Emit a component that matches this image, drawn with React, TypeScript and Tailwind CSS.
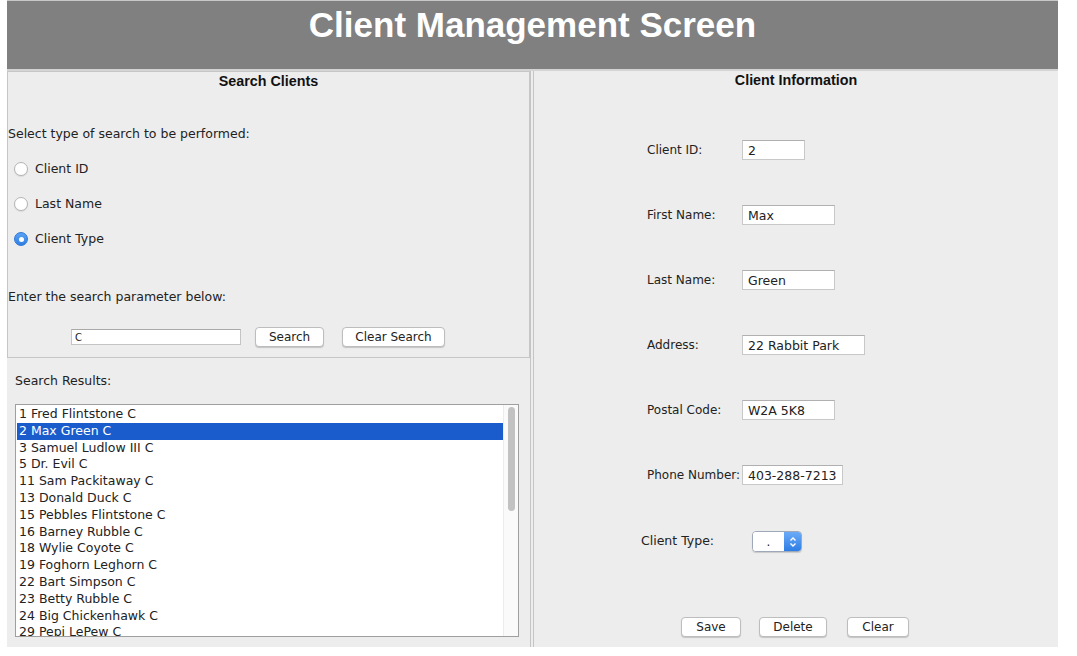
import { useState } from "react";

const clients = [
  "1 Fred Flintstone C",
  "2 Max Green C",
  "3 Samuel Ludlow III C",
  "5 Dr. Evil C",
  "11 Sam Packitaway C",
  "13 Donald Duck C",
  "15 Pebbles Flintstone C",
  "16 Barney Rubble C",
  "18 Wylie Coyote C",
  "19 Foghorn Leghorn C",
  "22 Bart Simpson C",
  "23 Betty Rubble C",
  "24 Big Chickenhawk C",
  "29 Pepi LePew C",
];

const fields = [
  { label: "Client ID:", value: "2", width: "w-[63px]" },
  { label: "First Name:", value: "Max", width: "w-[93px]" },
  { label: "Last Name:", value: "Green", width: "w-[93px]" },
  { label: "Address:", value: "22 Rabbit Park", width: "w-[123px]" },
  { label: "Postal Code:", value: "W2A 5K8", width: "w-[93px]" },
  { label: "Phone Number:", value: "403-288-7213", width: "w-[101px]" },
];

const body = "font-['DejaVu_Sans',sans-serif] text-[12px] text-[#222]";

const MacButton = ({ label, width }: { label: string; width: string }) => (
  <button
    className={`${width} h-[20px] bg-white border border-[#bdbdbd] rounded-[4px] shadow-[0_1px_1px_rgba(0,0,0,0.18)] text-[12px] leading-none text-[#222]`}
  >
    {label}
  </button>
);

const Radio = ({ label, checked }: { label: string; checked?: boolean }) => (
  <label className="flex items-center h-[20px] pl-[6px] gap-[7px]">
    {checked ? (
      <span className="w-[14px] h-[14px] rounded-full bg-gradient-to-b from-[#5aa2f5] to-[#2f7fe3] border border-[#2d78d6] flex items-center justify-center">
        <span className="w-[5px] h-[5px] rounded-full bg-white" />
      </span>
    ) : (
      <span className="w-[14px] h-[14px] rounded-full bg-white border border-[#b4b4b4] shadow-[0_1px_1px_rgba(0,0,0,0.08)]" />
    )}
    <span>{label}</span>
  </label>
);

const App = () => {
  const [selected, setSelected] = useState(1);

  return (
    <div className="w-[1077px] h-[656px] bg-white overflow-hidden">
      <div className={`ml-[7px] w-[1051px] h-[647px] bg-[#ededed] flex flex-col ${body}`}>
        {/* title bar */}
        <div className="h-[69px] shrink-0 bg-[#808080] border-t border-[#c8c8c8] flex justify-center pt-[4px]">
          <h1 className="font-['Liberation_Sans',Arial,sans-serif] font-bold text-[35px] leading-[40px] text-white">
            Client Management Screen
          </h1>
        </div>
        <div className="h-[2px] shrink-0 bg-[#d4d4d4]" />

        <div className="flex flex-1 min-h-0">
          {/* left side */}
          <div className="w-[523px] flex flex-col text-[12.5px]">
            <div className="h-[287px] border border-[#c6c6c6] flex flex-col">
              <h2 className="mt-[1px] text-center font-['Liberation_Sans',Arial,sans-serif] font-bold text-[14.3px] leading-[16px] text-[#111]">
                Search Clients
              </h2>
              <p className="mt-[37px] leading-[16px]">Select type of search to be performed:</p>
              <div className="mt-[17px] flex flex-col gap-[15px]">
                <Radio label="Client ID" />
                <Radio label="Last Name" />
                <Radio label="Client Type" checked />
              </div>
              <p className="mt-[40px] leading-[16px]">Enter the search parameter below:</p>
              <div className="mt-[21px] ml-[63px] flex items-center h-[22px]">
                <input
                  readOnly
                  value="C"
                  className="w-[170px] h-[16px] bg-white border border-[#c4c4c4] border-t-[#a9a9a9] px-[3px] text-[10px] outline-none"
                />
                <div className="ml-[14px]">
                  <MacButton label="Search" width="w-[69px]" />
                </div>
                <div className="ml-[18px]">
                  <MacButton label="Clear Search" width="w-[103px]" />
                </div>
              </div>
            </div>

            <div className="flex-1 flex flex-col pl-[8px] pr-[11px]">
              <p className="mt-[15px] leading-[16px]">Search Results:</p>
              <div className="mt-[15px] h-[233px] bg-white border border-[#9f9f9f] flex overflow-hidden">
                <ul className="flex-1 pl-[1px] pt-[1px] text-[12.5px]">
                  {clients.map((c, i) => (
                    <li
                      key={c}
                      onClick={() => setSelected(i)}
                      className={`h-[16.8px] leading-[16.8px] pl-[2px] whitespace-nowrap ${
                        i === selected ? "bg-[#1a5ccc] text-white" : "text-[#222]"
                      }`}
                    >
                      {c}
                    </li>
                  ))}
                </ul>
                <div className="w-[15px] border-l border-[#ececec] bg-[#fafafa] flex justify-center pt-[2px]">
                  <div className="w-[7px] h-[104px] rounded-full bg-[#c2c2c2]" />
                </div>
              </div>
            </div>
          </div>

          {/* divider */}
          <div className="w-[4px] border-l border-r border-[#c4c4c4]" />

          {/* right side */}
          <div className="flex-1 flex flex-col">
            <h2 className="mt-[1px] text-center font-['Liberation_Sans',Arial,sans-serif] font-bold text-[14.3px] leading-[16px] text-[#111]">
              Client Information
            </h2>
            <div className="mt-[52px] flex flex-col gap-[45px] pl-[113px]">
              {fields.map((f) => (
                <div key={f.label} className="flex items-center h-[20px]">
                  <span className="w-[95px] shrink-0 whitespace-nowrap">{f.label}</span>
                  <input
                    readOnly
                    value={f.value}
                    className={`${f.width} h-[20px] bg-white border border-[#c8c8c8] border-t-[#b0b0b0] px-[5px] text-[12.5px] text-[#222] outline-none`}
                  />
                </div>
              ))}
            </div>

            <div className="mt-[46px] pl-[107px] flex items-center h-[21px]">
              <span className="w-[111px] text-[12.5px]">Client Type:</span>
              <div className="w-[50px] h-[21px] flex rounded-[4px] border border-[#9fa8b8] overflow-hidden shadow-[0_1px_1px_rgba(0,0,0,0.15)]">
                <div className="flex-1 bg-white flex items-center justify-center text-[12px] leading-none">.</div>
                <div className="w-[17px] bg-gradient-to-b from-[#6aabf7] to-[#2d7de4] flex items-center justify-center">
                  <svg width="8" height="12" viewBox="0 0 8 12" fill="none" stroke="white" strokeWidth="1.4">
                    <path d="M1.5 4.5L4 2l2.5 2.5" />
                    <path d="M1.5 7.5L4 10l2.5-2.5" />
                  </svg>
                </div>
              </div>
            </div>

            <div className="mt-[65px] pl-[147px] flex items-center">
              <MacButton label="Save" width="w-[60px]" />
              <div className="ml-[18px]">
                <MacButton label="Delete" width="w-[68px]" />
              </div>
              <div className="ml-[20px]">
                <MacButton label="Clear" width="w-[62px]" />
              </div>
            </div>
          </div>
        </div>
      </div>
    </div>
  );
};

export default App;
